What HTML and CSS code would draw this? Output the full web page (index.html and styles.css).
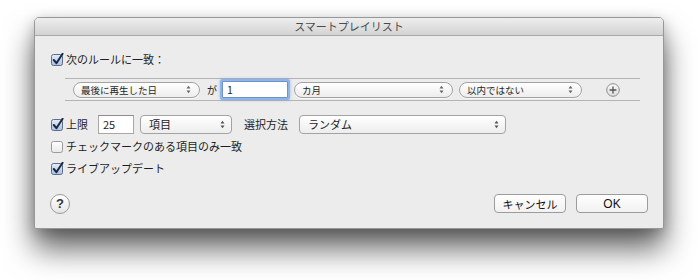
FILE: index.html
```html
<!DOCTYPE html>
<html lang="ja">
<head>
<meta charset="utf-8">
<title>スマートプレイリスト</title>
<link rel="stylesheet" href="styles.css">
</head>
<body>
<div class="window">
  <div class="titlebar">スマートプレイリスト</div>
  <div class="content">
    <div class="row row-match">
      <svg class="cb" width="13" height="13" viewBox="0 0 13 13"><defs><linearGradient id="g1" x1="0" y1="0" x2="0" y2="1"><stop offset="0" stop-color="#e6eef9"/><stop offset="1" stop-color="#a7c1e4"/></linearGradient></defs><rect x="0.5" y="1.5" width="11" height="11" rx="2" fill="url(#g1)" stroke="#5d6d86"/><path d="M2.8 7 L5.4 10.2 L11.6 0.8" fill="none" stroke="#1b2740" stroke-width="2" stroke-linecap="round" stroke-linejoin="round"/></svg>
      <span class="label">次のルールに一致：</span>
    </div>
    <div class="rules">
      <div class="popup pill w-field">最後に再生した日<svg class="arr" width="5" height="9" viewBox="0 0 5 9"><path d="M0.5 3.5 L2.5 0.8 L4.5 3.5 Z M0.5 5.5 L2.5 8.2 L4.5 5.5 Z" fill="#666"/></svg></div>
      <span class="ga">が</span>
      <div class="field focus w-num">1</div>
      <div class="popup pill w-unit">カ月<svg class="arr" width="5" height="9" viewBox="0 0 5 9"><path d="M0.5 3.5 L2.5 0.8 L4.5 3.5 Z M0.5 5.5 L2.5 8.2 L4.5 5.5 Z" fill="#666"/></svg></div>
      <div class="popup pill w-op">以内ではない<svg class="arr" width="5" height="9" viewBox="0 0 5 9"><path d="M0.5 3.5 L2.5 0.8 L4.5 3.5 Z M0.5 5.5 L2.5 8.2 L4.5 5.5 Z" fill="#666"/></svg></div>
      <svg class="plus" width="14" height="14" viewBox="0 0 14 14"><defs><linearGradient id="g2" x1="0" y1="0" x2="0" y2="1"><stop offset="0" stop-color="#fafafa"/><stop offset="1" stop-color="#dcdcdc"/></linearGradient></defs><circle cx="7" cy="7" r="6.3" fill="url(#g2)" stroke="#8c8c8c"/><path d="M7 3.6 V10.4 M3.6 7 H10.4" stroke="#555" stroke-width="1.3"/></svg>
    </div>
    <div class="row row-limit">
      <svg class="cb" width="13" height="13" viewBox="0 0 13 13"><defs><linearGradient id="g3" x1="0" y1="0" x2="0" y2="1"><stop offset="0" stop-color="#e6eef9"/><stop offset="1" stop-color="#a7c1e4"/></linearGradient></defs><rect x="0.5" y="1.5" width="11" height="11" rx="2" fill="url(#g3)" stroke="#5d6d86"/><path d="M2.8 7 L5.4 10.2 L11.6 0.8" fill="none" stroke="#1b2740" stroke-width="2" stroke-linecap="round" stroke-linejoin="round"/></svg>
      <span class="label">上限</span>
      <div class="field w-limit">25</div>
      <div class="popup rect w-items">項目<svg class="arr" width="5" height="9" viewBox="0 0 5 9"><path d="M0.5 3.5 L2.5 0.8 L4.5 3.5 Z M0.5 5.5 L2.5 8.2 L4.5 5.5 Z" fill="#555"/></svg></div>
      <span class="label sel">選択方法</span>
      <div class="popup rect w-method">ランダム<svg class="arr" width="5" height="9" viewBox="0 0 5 9"><path d="M0.5 3.5 L2.5 0.8 L4.5 3.5 Z M0.5 5.5 L2.5 8.2 L4.5 5.5 Z" fill="#555"/></svg></div>
    </div>
    <div class="row row-check">
      <svg class="cb" width="13" height="13" viewBox="0 0 13 13"><defs><linearGradient id="g4" x1="0" y1="0" x2="0" y2="1"><stop offset="0" stop-color="#ffffff"/><stop offset="1" stop-color="#e9e9e9"/></linearGradient></defs><rect x="0.5" y="1.5" width="11" height="11" rx="2" fill="url(#g4)" stroke="#9b9b9b"/></svg>
      <span class="label">チェックマークのある項目のみ一致</span>
    </div>
    <div class="row row-live">
      <svg class="cb" width="13" height="13" viewBox="0 0 13 13"><defs><linearGradient id="g5" x1="0" y1="0" x2="0" y2="1"><stop offset="0" stop-color="#e6eef9"/><stop offset="1" stop-color="#a7c1e4"/></linearGradient></defs><rect x="0.5" y="1.5" width="11" height="11" rx="2" fill="url(#g5)" stroke="#5d6d86"/><path d="M2.8 7 L5.4 10.2 L11.6 0.8" fill="none" stroke="#1b2740" stroke-width="2" stroke-linecap="round" stroke-linejoin="round"/></svg>
      <span class="label">ライブアップデート</span>
    </div>
    <div class="footer">
      <div class="help">?</div>
      <div class="buttons">
        <div class="btn w-cancel">キャンセル</div>
        <div class="btn w-ok">OK</div>
      </div>
    </div>
  </div>
</div>
</body>
</html>
```

FILE: styles.css
```css
html, body {
  margin: 0;
  padding: 0;
  background: #ffffff;
}
body {
  width: 698px;
  height: 280px;
  overflow: hidden;
  font-family: "Noto Sans CJK JP", "Liberation Sans", sans-serif;
  color: #1e1e1e;
}
.window {
  box-sizing: border-box;
  margin: 17px 0 0 34px;
  width: 630px;
  height: 212px;
  background: #ececec;
  border: 1px solid #979797;
  border-radius: 5px 5px 2px 2px;
  box-shadow: 0 20px 30px rgba(0, 0, 0, 0.6), 0 4px 14px rgba(0, 0, 0, 0.22);
  display: flex;
  flex-direction: column;
}
.titlebar {
  height: 17px;
  line-height: 17px;
  text-align: center;
  font-size: 11px;
  color: #4b4b4b;
  background: linear-gradient(#eeeeee, #d3d3d3);
  border-bottom: 1px solid #a9a9a9;
  border-radius: 4px 4px 0 0;
}
.content {
  padding: 0 15px 0 16px;
  display: flex;
  flex-direction: column;
}
.row {
  display: flex;
  align-items: center;
}
.cb {
  flex: none;
  margin-right: 2px;
}
.label {
  font-size: 11px;
  line-height: 1;
  white-space: nowrap;
}
.row-match {
  margin-top: 14px;
  height: 18px;
}
.rules {
  margin: 10px 0 0 14px;
  width: 567px;
  height: 21px;
  border-top: 1px solid #b4b4b4;
  border-bottom: 1px solid #b4b4b4;
  display: flex;
  align-items: center;
  padding-left: 8px;
  box-sizing: content-box;
}
.popup {
  box-sizing: border-box;
  display: flex;
  align-items: center;
  justify-content: space-between;
  border: 1px solid #a3a3a3;
  background: linear-gradient(#ffffff, #ededed);
  white-space: nowrap;
  flex: none;
}
.popup.pill {
  height: 16px;
  border-radius: 8px;
  font-size: 9.5px;
  padding: 0 8px 0 7px;
  box-shadow: 0 1px 0 rgba(255,255,255,0.6);
}
.popup.rect {
  height: 19px;
  border-radius: 4px;
  font-size: 11px;
  padding: 0 6px 0 8px;
}
.arr {
  flex: none;
}
.w-field { width: 127px; }
.w-unit { width: 159px; margin-left: 6px; }
.w-op { width: 123px; margin-left: 6px; }
.ga {
  font-size: 10px;
  margin: 0 5px 0 7px;
}
.field {
  box-sizing: border-box;
  background: #ffffff;
  border: 1px solid #a8a8a8;
  border-top-color: #8f8f8f;
  font-size: 10.5px;
  padding-left: 4px;
  display: flex;
  align-items: center;
  flex: none;
}
.field.focus {
  height: 17px;
  border-color: #6f93c9;
  box-shadow: 0 0 0 2px #8db5ea, 0 0 3px 2px rgba(90, 140, 220, 0.5);
  border-radius: 1px;
}
.w-num { width: 66px; }
.plus {
  margin-left: 24px;
  flex: none;
}
.row-limit {
  margin-top: 13px;
  height: 20px;
}
.w-limit {
  width: 36px;
  height: 19px;
  margin-left: 10px;
  font-size: 11px;
}
.w-items {
  width: 92px;
  margin-left: 6px;
}
.sel {
  margin-left: 12px;
}
.w-method {
  width: 207px;
  margin-left: 11px;
}
.row-check {
  margin-top: 3px;
  height: 18px;
}
.row-live {
  margin-top: 4px;
  height: 18px;
}
.footer {
  margin-top: 16px;
  display: flex;
  align-items: center;
  justify-content: space-between;
  height: 21px;
}
.help {
  box-sizing: border-box;
  width: 20px;
  height: 20px;
  border-radius: 50%;
  border: 1px solid #9a9a9a;
  background: linear-gradient(#ffffff, #e6e6e6);
  display: flex;
  align-items: center;
  justify-content: center;
  font-family: "Liberation Sans", sans-serif;
  font-weight: bold;
  font-size: 13px;
  color: #333;
  margin-left: -1px;
}
.buttons {
  display: flex;
  gap: 10px;
}
.btn {
  box-sizing: border-box;
  height: 19px;
  border: 1px solid #9c9c9c;
  border-radius: 4px;
  background: linear-gradient(#ffffff, #f1f1f1);
  display: flex;
  align-items: center;
  justify-content: center;
  font-size: 11px;
  color: #111;
}
.w-cancel { width: 72px; }
.w-ok { width: 72px; font-family: "Liberation Sans", "Noto Sans CJK JP", sans-serif; font-size: 12px; }
```
